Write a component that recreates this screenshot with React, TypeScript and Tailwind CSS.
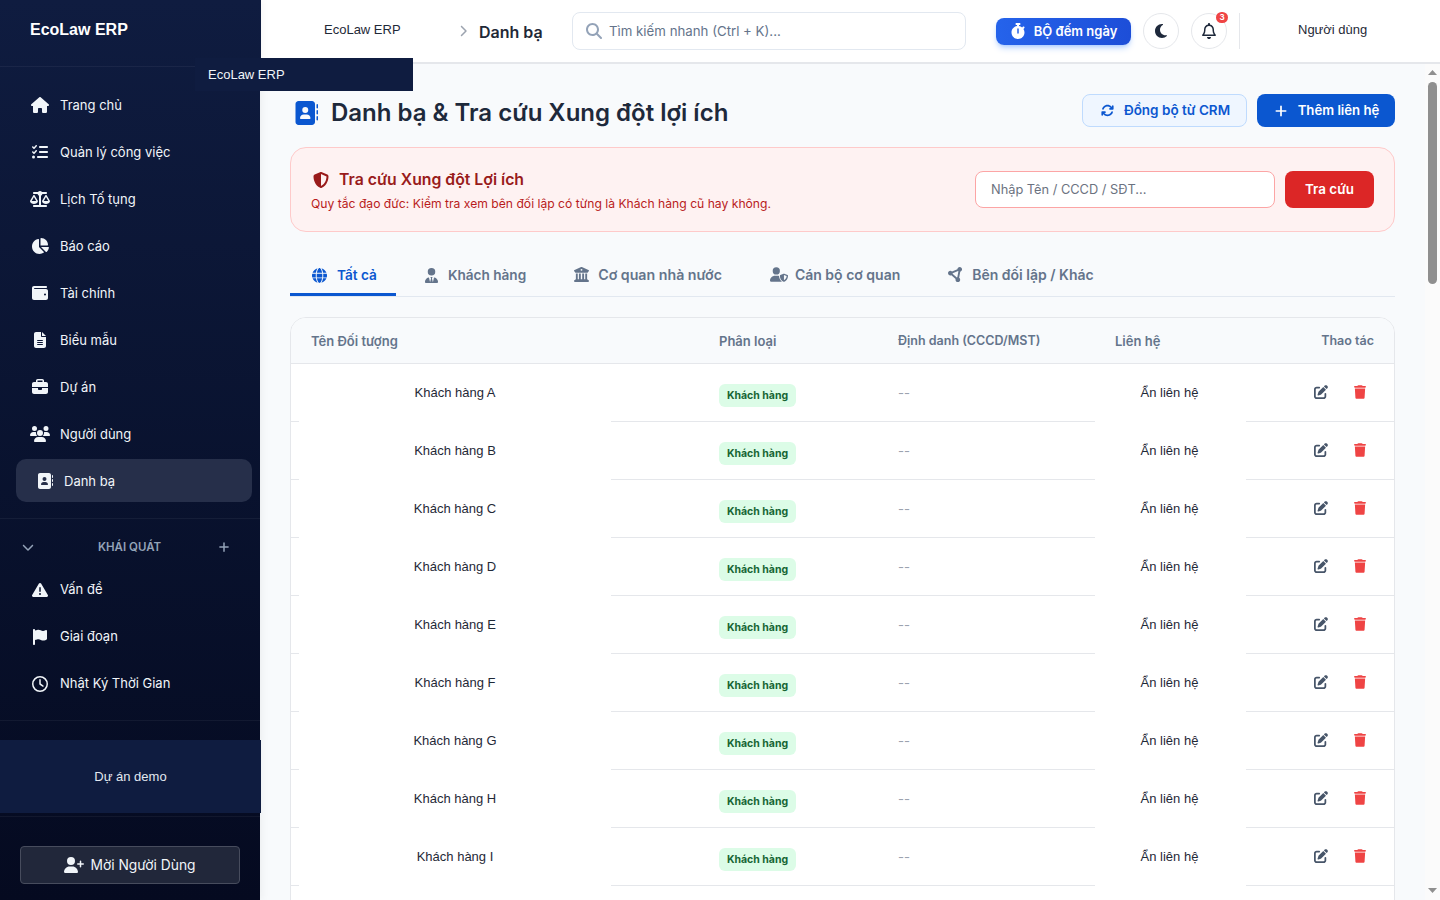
import {
  FaHouse, FaListCheck, FaScaleBalanced, FaChartPie, FaWallet, FaFileLines, FaBriefcase, FaUsers,
  FaAddressBook, FaTriangleExclamation, FaFlag, FaRegClock, FaUserPlus, FaChevronDown, FaPlus,
  FaStopwatch, FaMoon, FaRegBell, FaArrowsRotate, FaGlobe, FaUserTie, FaBuildingColumns, FaUserShield,
  FaPenToSquare, FaTrash, FaMagnifyingGlass, FaChevronRight, FaCircleNodes, FaShieldHalved,
} from "react-icons/fa6";

const NAV = [
  { icon: FaHouse, size: "h-4 w-[18px]", label: "Trang chủ" },
  { icon: FaListCheck, size: "h-4 w-4", label: "Quản lý công việc" },
  { icon: FaScaleBalanced, size: "h-4 w-5", label: "Lịch Tố tụng" },
  { icon: FaChartPie, size: "h-4 w-[18px]", label: "Báo cáo" },
  { icon: FaWallet, size: "h-4 w-4", label: "Tài chính" },
  { icon: FaFileLines, size: "h-4 w-4", label: "Biểu mẫu" },
  { icon: FaBriefcase, size: "h-4 w-4", label: "Dự án" },
  { icon: FaUsers, size: "h-4 w-5", label: "Người dùng" },
];

const OVERVIEW = [
  { icon: FaTriangleExclamation, label: "Vấn đề" },
  { icon: FaFlag, label: "Giai đoạn" },
  { icon: FaRegClock, label: "Nhật Ký Thời Gian" },
];

const CONTACTS = "ABCDEFGHIJ".split("").map((l) => `Khách hàng ${l}`);

function Sidebar() {
  return (
    <aside className="relative z-10 w-[260px] h-full shrink-0 flex flex-col bg-gradient-to-b from-[#0f1c40] to-[#050a20] text-white font-[Inter,sans-serif] shadow-[2px_0_8px_rgba(0,0,0,0.05)]">
      <div className="h-[67px] shrink-0 pl-[30px] pt-[20px] border-b border-white/5 font-['Liberation_Sans',sans-serif] font-bold text-[16px] leading-[20px]">
        EcoLaw ERP
      </div>
      <nav className="pt-[14px] pl-4 pr-2 pb-[16px] border-b border-white/5">
        {NAV.map((n) => (
          <a key={n.label} className="h-[47px] flex items-center pl-[14px] text-[13px] text-[#f1f5f9]">
            <span className="w-[20px] flex justify-center mr-[10px]"><n.icon className={n.size} /></span>
            <span className="pt-[2px]">{n.label}</span>
          </a>
        ))}
        <a className="h-[43px] mt-[2px] flex items-center pl-[20px] rounded-[10px] bg-[#262f4a] text-[13px] text-[#f1f5f9]">
          <span className="w-[18px] flex justify-center mr-[10px]"><FaAddressBook className="h-4 w-4" /></span>
          <span className="pt-[2px]">Danh bạ</span>
        </a>
      </nav>
      <div className="h-[47px] shrink-0 pt-[9px] flex items-center justify-between pl-[22px] pr-[30px] text-[#94a3b8]">
        <FaChevronDown className="h-3 w-3" />
        <span className="ml-[7px] pt-[1px] text-[11.5px] font-semibold">KHÁI QUÁT</span>
        <FaPlus className="h-3 w-3" />
      </div>
      <div className="pl-4 pr-2 pb-[13px] border-b border-white/5">
        {OVERVIEW.map((n) => (
          <a key={n.label} className="h-[47px] flex items-center pl-[14px] text-[13px] text-[#f1f5f9]">
            <span className="w-[20px] flex justify-center mr-[10px]"><n.icon className="h-4 w-4" /></span>
            {n.label}
          </a>
        ))}
      </div>
      <div className="mt-[19px] h-[73px] w-[261px] shrink-0 flex items-center justify-center bg-[#0f1c40] font-['Liberation_Sans',sans-serif] text-[13px] text-[#e2e8f0]">
        Dự án demo
      </div>
      <div className="mt-[3px] flex-1 border-t border-white/5 px-5 pt-[29px]">
        <button className="w-full h-[38px] flex items-center justify-center gap-[6px] rounded bg-[#21273a] border border-[#474c5d] text-[13.8px] text-[#f1f5f9]">
          <FaUserPlus className="h-4 w-5" /> Mời Người Dùng
        </button>
      </div>
    </aside>
  );
}

function Header() {
  return (
    <header className="h-[64px] shrink-0 flex items-center bg-white border-b-2 border-b-[#e5e7eb] border-l border-l-[#0f1c40] font-[Inter,sans-serif]">
      <span className="ml-[63px] w-[135px] pb-[2px] font-['Liberation_Sans',sans-serif] text-[13px] text-[#1f2937]">EcoLaw ERP</span>
      <FaChevronRight className="h-3 w-[8px] text-[#9ca3af]" />
      <span className="ml-[12px] w-[93px] pt-[2px] text-[16px] font-semibold text-[#1f2937]">Danh bạ</span>
      <div className="w-[394px] h-[38px] flex items-center gap-[7px] pl-[13px] rounded-lg border border-[#e2e8f0] text-[13.25px] text-[#64748b]">
        <FaMagnifyingGlass className="h-4 w-4 text-[#94a3b8]" />
        <span className="pt-[2px]">Tìm kiếm nhanh (Ctrl + K)...</span>
      </div>
      <button className="ml-[30px] h-[27px] w-[135px] flex items-center justify-center gap-[8px] rounded-lg bg-gradient-to-r from-[#2563eb] to-[#1d4ed8] shadow-md shadow-blue-500/30 text-[13px] font-semibold text-white">
        <FaStopwatch className="h-4 w-4" />
        <span className="pt-[2px]">BỘ đếm ngày</span>
      </button>
      <button className="ml-[12px] w-[36px] h-[36px] flex items-center justify-center rounded-full border border-[#e5e7eb] text-[#1e293b]">
        <FaMoon className="h-4 w-4" />
      </button>
      <button className="relative ml-[12px] w-[36px] h-[36px] flex items-center justify-center rounded-full border border-[#e5e7eb] text-[#1e293b]">
        <FaRegBell className="h-4 w-4" />
        <span className="absolute -top-[2px] -right-[2px] w-3 h-[11px] rounded-full bg-[#ef4444] text-white text-[8px] font-bold leading-[11px] text-center">3</span>
      </button>
      <div className="ml-[12px] w-px h-[36px] bg-[#e5e7eb]" />
      <span className="ml-[58px] pb-[2px] font-['Liberation_Sans',sans-serif] text-[13px] text-[#1f2937]">Người dùng</span>
    </header>
  );
}

function ContactRow({ name }: { name: string }) {
  return (
    <div className="h-[58px] flex text-[13px] text-[#1f2937]">
      <div className="w-[8px] border-b border-[#e5e7eb]" />
      <div className="w-[312px] flex items-center justify-center font-['Liberation_Sans',sans-serif]">{name}</div>
      <div className="w-[484px] flex border-b border-[#e5e7eb]">
        <div className="w-[108px]" />
        <div className="w-[179px] pt-[5px] flex items-center">
          <span className="h-[23px] w-[77px] pt-[1px] flex items-center justify-center rounded-md bg-[#dcfce7] text-[10.5px] font-bold text-[#166534]">Khách hàng</span>
        </div>
        <div className="flex items-center pt-[3px] text-[#9ca3af]">--</div>
      </div>
      <div className="w-[151px] pb-[1px] pr-[2px] flex items-center justify-center font-['Liberation_Sans',sans-serif]">Ẩn liên hệ</div>
      <div className="flex-1 pb-[1px] pr-[28px] flex items-center justify-end gap-[26px] border-b border-[#e5e7eb]">
        <FaPenToSquare className="h-[14px] w-[14px] text-[#475569]" />
        <FaTrash className="h-[14px] w-[12px] text-[#ef4444]" />
      </div>
    </div>
  );
}

export default function App() {
  return (
    <div className="relative h-screen w-full flex overflow-hidden bg-[#f8fafc]">
      <Sidebar />
      <div className="flex-1 min-w-0 flex flex-col">
        <Header />
        <div className="flex-1 min-h-0 flex">
          <main className="flex-1 min-w-0 overflow-hidden px-[30px] font-[Inter,sans-serif]">
            <div className="flex items-center justify-between pt-[9px] h-[84px]">
              <h1 className="pl-[4px] pt-[5px] flex items-center gap-[13px] text-[24px] font-semibold text-[#1e293b]">
                <FaAddressBook className="h-6 w-6 text-[#0b57d0]" /> Danh bạ &amp; Tra cứu Xung đột lợi ích
              </h1>
              <div className="flex gap-[10px]">
                <button className="h-[33px] w-[165px] pl-[2px] flex items-center justify-center gap-[10px] rounded-lg bg-[#eff6ff] border border-[#bfdbfe] text-[13.5px] font-semibold text-[#0b57d0]">
                  <FaArrowsRotate className="h-[13px] w-[13px]" /> Đồng bộ từ CRM
                </button>
                <button className="h-[33px] w-[138px] pl-[2px] flex items-center justify-center gap-[11px] rounded-lg bg-[#0b57d0] text-[13.2px] font-semibold text-white">
                  <FaPlus className="h-[14px] w-3" /> Thêm liên hệ
                </button>
              </div>
            </div>

            <section className="mt-[-1px] h-[85px] flex items-center justify-between px-5 rounded-2xl bg-[#fef2f2] border border-[#fecaca]">
              <div className="pt-[4px]">
                <h3 className="pl-[2px] flex items-center gap-[10px] text-[15.8px] leading-[20px] font-semibold text-[#991b1b]">
                  <FaShieldHalved className="h-4 w-4" /> Tra cứu Xung đột Lợi ích
                </h3>
                <p className="mt-[5px] text-[12.15px] leading-[18px] text-[#b91c1c]">Quy tắc đạo đức: Kiểm tra xem bên đối lập có từng là Khách hàng cũ hay không.</p>
              </div>
              <div className="flex gap-[10px]">
                <div className="w-[300px] h-[37px] flex items-center px-[15px] rounded-lg bg-white border border-[#fca5a5] text-[12.8px] text-[#6b7280]">Nhập Tên / CCCD / SĐT...</div>
                <button className="w-[89px] h-[37px] rounded-lg bg-[#dc2626] text-[13.4px] font-semibold text-white">Tra cứu</button>
              </div>
            </section>

            <div className="mt-[21px] flex gap-2 border-b border-[#e2e8f0] text-[14px] font-semibold text-[#64748b]">
              <div className="h-[43px] pt-[4px] flex items-center gap-[10px] pl-[22px] pr-[19px] border-b-[3px] border-[#0b57d0] text-[13.6px] text-[#0b57d0]">
                <FaGlobe className="h-[15px] w-[15px]" /> Tất cả
              </div>
              <div className="h-[43px] pt-[4px] flex items-center gap-[9px] px-5 border-b-[3px] border-transparent text-[13.6px]">
                <FaUserTie className="h-[15px] w-[15px]" /> Khách hàng
              </div>
              <div className="h-[43px] pt-[3px] flex items-center gap-[9px] px-5 border-b-[3px] border-transparent text-[14.2px]">
                <FaBuildingColumns className="h-[15px] w-[15px]" /> Cơ quan nhà nước
              </div>
              <div className="h-[43px] pt-[3px] flex items-center gap-[7px] px-5 border-b-[3px] border-transparent">
                <FaUserShield className="h-[15px] w-[18px]" /> Cán bộ cơ quan
              </div>
              <div className="h-[43px] pt-[3px] flex items-center gap-[9px] px-5 border-b-[3px] border-transparent">
                <FaCircleNodes className="h-[15px] w-[15px]" /> Bên đối lập / Khác
              </div>
            </div>

            <div className="mt-[20px] rounded-2xl bg-white border border-[#e5e7eb] overflow-hidden">
              <div className="h-[46px] pt-[2px] flex items-center bg-[#f8fafc] border-b border-[#e5e7eb] text-[13px] font-semibold text-[#64748b]">
                <span className="w-[428px] pl-5">Tên Đối tượng</span>
                <span className="w-[179px]">Phân loại</span>
                <span className="w-[217px] text-[12.5px]">Định danh (CCCD/MST)</span>
                <span>Liên hệ</span>
                <span className="ml-auto pr-5 text-[12.5px]">Thao tác</span>
              </div>
              {CONTACTS.map((c) => <ContactRow key={c} name={c} />)}
            </div>
          </main>
          {/* thanh cuộn */}
          <div className="w-[15px] shrink-0 flex flex-col items-center pt-[6px] pb-[7px] bg-[#fbfbfb]">
            <svg className="w-[9px] h-[5px] text-[#8f8f8f]" viewBox="0 0 9 5"><polygon points="4.5,0 9,5 0,5" fill="currentColor" /></svg>
            <div className="mt-[7px] h-[202px] w-[9px] rounded-full bg-[#8f8f8f]" />
            <svg className="mt-auto w-[9px] h-[5px] text-[#8f8f8f]" viewBox="0 0 9 5"><polygon points="0,0 9,0 4.5,5" fill="currentColor" /></svg>
          </div>
        </div>
      </div>
      <div className="absolute z-20 left-[195px] top-[58px] w-[218px] h-[33px] flex items-center pl-[13px] bg-[#0f1c40] font-['Liberation_Sans',sans-serif] text-[13px] text-[#f1f5f9]">
        EcoLaw ERP
      </div>
    </div>
  );
}
